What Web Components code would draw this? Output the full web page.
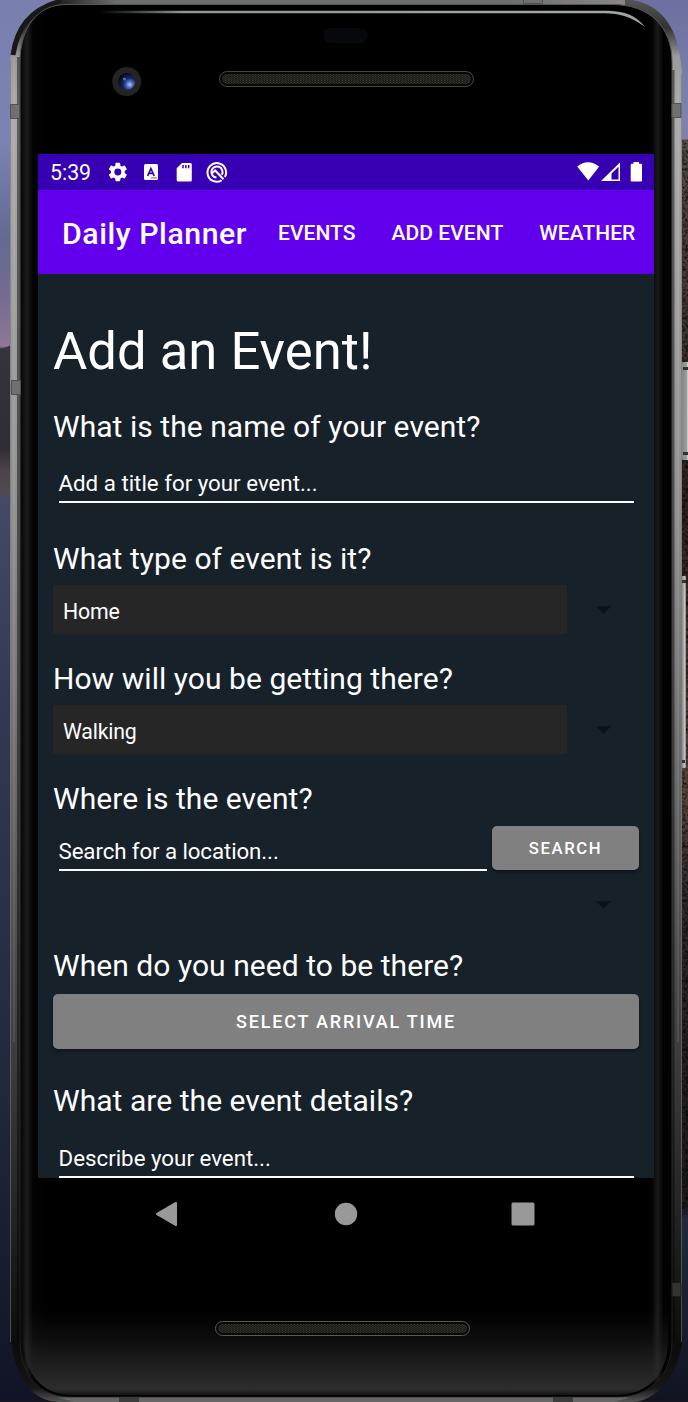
<!DOCTYPE html>
<html lang="en">
<head>
<meta charset="utf-8">
<title>Daily Planner</title>
<style>
html,body{margin:0;padding:0;background:#000;overflow:hidden}
body{width:688px;height:1402px;font-family:Roboto,"Liberation Sans",sans-serif;color:#fff}
</style>
</head>
<body>
<phone-device>
  <app-screen>
    <status-bar time="5:39"></status-bar>
    <app-bar heading="Daily Planner"><span>EVENTS</span><span>ADD EVENT</span><span>WEATHER</span></app-bar>
    <event-form></event-form>
  </app-screen>
  <nav-buttons></nav-buttons>
</phone-device>
<script>
const define = (name, html, setup) => customElements.define(name, class extends HTMLElement {
  constructor() {
    super();
    const t = document.createElement('template');
    t.innerHTML = html;
    this.attachShadow({ mode: 'open' }).append(t.content.cloneNode(true));
  }
  connectedCallback() { if (setup) setup(this, this.shadowRoot); }
});

define('phone-body', `
<style>:host{display:block;width:688px;height:1402px}svg{display:block}</style>
<svg width="688" height="1402" viewBox="0 0 688 1402">
  <defs>
    <linearGradient id="left" x2="0" y2="1402" gradientUnits="userSpaceOnUse">
      <stop offset="0" stop-color="#7980af"/><stop offset=".1" stop-color="#7b83b4"/><stop offset=".17" stop-color="#646993"/>
      <stop offset=".21" stop-color="#746b91"/><stop offset=".247" stop-color="#8d7895"/><stop offset=".249" stop-color="#35333b"/>
      <stop offset=".32" stop-color="#302e34"/><stop offset=".335" stop-color="#4a4449"/><stop offset=".352" stop-color="#504a52"/>
      <stop offset=".355" stop-color="#454965"/><stop offset=".5" stop-color="#343953"/><stop offset=".75" stop-color="#25293f"/><stop offset="1" stop-color="#111426"/>
    </linearGradient>
    <linearGradient id="right" x2="0" y2="1402" gradientUnits="userSpaceOnUse">
      <stop offset="0" stop-color="#6d70a0"/><stop offset=".08" stop-color="#8081ad"/><stop offset=".099" stop-color="#8380a8"/>
      <stop offset=".1" stop-color="#554c4c"/><stop offset=".16" stop-color="#4a3d3c"/><stop offset=".25" stop-color="#3b3330"/>
      <stop offset=".36" stop-color="#2b211c"/><stop offset=".56" stop-color="#57453f"/><stop offset=".65" stop-color="#2b272b"/>
      <stop offset=".86" stop-color="#1d191a"/><stop offset=".87" stop-color="#242a3b"/><stop offset="1" stop-color="#101322"/>
    </linearGradient>
    <linearGradient id="side" x2="0" y2="1402" gradientUnits="userSpaceOnUse">
      <stop offset="0" stop-color="#555"/><stop offset=".02" stop-color="#333"/><stop offset=".04" stop-color="#999"/><stop offset=".08" stop-color="#aaa"/>
      <stop offset=".35" stop-color="#929292"/><stop offset=".5" stop-color="#777"/><stop offset=".7" stop-color="#484848"/>
      <stop offset=".85" stop-color="#272727"/><stop offset=".96" stop-color="#0c0c0c"/><stop offset=".99" stop-color="#161616"/><stop offset="1" stop-color="#555"/>
    </linearGradient>
    <linearGradient id="rim" x2="0" y2="1402" gradientUnits="userSpaceOnUse"><stop offset="0" stop-color="#555"/><stop offset=".6" stop-color="#3a3a3a"/><stop offset="1" stop-color="#1c1c1c"/></linearGradient>
    <linearGradient id="top"><stop offset="0" stop-color="#222"/><stop offset=".1" stop-color="#6c6e6c"/><stop offset=".8" stop-color="#6c6e6c"/><stop offset="1" stop-color="#888"/></linearGradient>
    <linearGradient id="shine"><stop offset="0" stop-color="#899" stop-opacity="0"/><stop offset=".15" stop-color="#8d9595"/><stop offset=".85" stop-color="#a0a8a8"/><stop offset="1" stop-color="#dde3e3" stop-opacity=".7"/></linearGradient>
    <linearGradient id="edge" x1="20" x2="668" gradientUnits="userSpaceOnUse">
      <stop offset="0" stop-color="#040404"/><stop offset=".011" stop-color="#1b1b1b"/><stop offset=".02" stop-color="#030303"/><stop offset=".04" stop-color="#000"/>
      <stop offset=".965" stop-color="#000"/><stop offset=".975" stop-color="#030303"/><stop offset=".984" stop-color="#1b1b1b"/><stop offset=".993" stop-color="#020202"/>
    </linearGradient>
    <linearGradient id="chin" x2="0" y2="1"><stop offset="0" stop-color="#2c2c2c" stop-opacity="0"/><stop offset=".35" stop-color="#2c2c2c" stop-opacity=".3"/><stop offset=".93" stop-color="#2d2d2d"/><stop offset="1" stop-color="#151515"/></linearGradient>
    <radialGradient id="lens" cx=".68" cy=".68" r=".7"><stop offset="0" stop-color="#b4c4ff"/><stop offset=".25" stop-color="#5272c8"/><stop offset=".55" stop-color="#18265e"/><stop offset="1" stop-color="#05081b"/></radialGradient>
    <pattern id="mesh" width="3" height="2" patternUnits="userSpaceOnUse"><rect width="3" height="2" fill="#1c1a17"/><path d="M0 0h1v1H0zM1.500 1h1v1h-1z" fill="#3a3731"/></pattern>
    <filter id="grain" x="0" y="0" width="1" height="1"><feTurbulence type="fractalNoise" baseFrequency=".35" numOctaves="3" seed="4"/><feColorMatrix values="0 0 0 0 0 0 0 0 0 0 0 0 0 0 0 2.600 0 0 0 -1.100"/></filter>
    <linearGradient id="button"><stop offset="0" stop-color="#888"/><stop offset=".55" stop-color="#999"/><stop offset=".7" stop-color="#ccc"/><stop offset="1" stop-color="#888"/></linearGradient>
  </defs>
  <rect width="344" height="1402" fill="url(#left)"/>
  <rect x="344" width="344" height="1402" fill="url(#right)"/>
  <path d="M0 350 11 345v5H0z" fill="#37343c"/>
  <rect x="675" y="140" width="13" height="1075" filter="url(#grain)" opacity=".75"/>
  <path d="M0 1401h688v1H0z" fill="#25151c"/>
  <rect x="682" y="362" width="8" height="98" rx="1" fill="url(#button)"/>
  <path d="M683 367h5v3h-5zM683 452h5v3h-5z" fill="#333"/>
  <rect x="680" y="576" width="6" height="192" rx="1" fill="url(#button)"/>
  <path d="M682 580h4v3h-4zM682 760h3v3h-3z" fill="#333"/>
  <path d="M65 -1H620C656-1 675 22 680 56L682 72V1345C677 1375 656 1402 632 1402H60C34 1402 15 1379 12 1345L10 1340V60C15 30 37-1 65-1Z" fill="url(#side)"/>
  <path d="M62 1Q19 11 13 55" fill="none" stroke="#181818" stroke-width="5"/>
  <path d="M60 0H625V5H60z" fill="url(#top)"/>
  <path d="M14 57V1042M678 70V1042" stroke="#fff" stroke-opacity=".08" stroke-width="2"/>
  <path d="M18.500 57V1342M673 70V1342" stroke="#000" stroke-opacity=".45" stroke-width="3"/>
  <path d="M10.500 60V1342M681.500 74V1342" stroke="#777" stroke-opacity=".6"/>
  <path d="M66 4.500H612C650 4.500 672 27 672 62V1340C672 1374 652 1397 616 1397H72C38 1397 20 1374 20 1340V62C20 27 38 4.500 66 4.500Z" fill="url(#edge)" stroke="url(#rim)" stroke-width="1"/>
  <path d="M24 1310H668V1340C668 1374 648 1395 616 1395H72C42 1395 24 1374 24 1340Z" fill="url(#chin)"/>
  <path d="M100 10.800H608C626 11.500 637 16 645 27C630 16 620 13.800 605 13.300H100Z" fill="url(#shine)"/>
  <g fill="#707070" stroke="#505050" stroke-width="1"><path d="M10.500 104.500h9v14h-9zM11.500 380.500h9v14h-9zM672 103.500h9v14h-9z"/><path d="M672 1282.500h9v14h-9z" fill="#333" stroke="#1b1b1b"/><path d="M523.500-.5h19v4h-19z"/></g>
  <path d="M58 1397.500H630L614 1402H74Z" fill="#686666"/><path d="M119 1397h20v5h-20zM553 1397h20v5h-20z" fill="#3c3c3c"/>
  <rect x="323" y="28" width="45" height="15" rx="7.500" fill="#07080c"/>
  <circle cx="126.700" cy="81.500" r="14.500" fill="#252424"/><circle cx="126.700" cy="81.500" r="8.500" fill="url(#lens)"/><circle cx="124.500" cy="79" r="1.600" fill="#4c69bd"/>
  <rect x="219.500" y="71.500" width="254" height="15" rx="7.500" fill="#080808" stroke="#474543"/><rect x="222" y="74" width="249" height="10" rx="5" fill="url(#mesh)"/>
  <rect x="215.500" y="1321.500" width="254" height="14" rx="7" fill="#080808" stroke="#5b5958"/><rect x="218" y="1324" width="249" height="9" rx="4.500" fill="url(#mesh)"/>
</svg>`);

define('phone-device', `
<style>
:host{display:grid;width:688px;height:1402px}
phone-body,.face{grid-area:1/1}
.face{display:flex;flex-direction:column;padding:154px 34px 0 38px;isolation:isolate}
</style>
<phone-body></phone-body><div class="face"><slot></slot></div>`);

define('app-screen', `
<style>:host{display:flex;flex-direction:column;width:616px;height:1024px;background:#17212a;overflow:hidden}</style><slot></slot>`);

define('status-bar', `
<style>
:host{display:flex;align-items:center;height:36px;background:#3700b3;flex:none}
.time{width:70px;padding-left:12px;box-sizing:border-box;font-size:21.300px;line-height:36px;padding-top:2px}
svg{display:block}
</style>
<div class="time"></div>
<svg width="546" height="36" viewBox="108 154 546 36" fill="#fff">
  <path transform="translate(106.300 160.500) scale(.96)" d="M19.140 12.940c.04-.3.060-.61.060-.94s-.02-.64-.07-.94l2.030-1.580a.49.490 0 0 0 .12-.61l-1.920-3.320a.488.488 0 0 0-.59-.22l-2.390.96c-.5-.38-1.030-.7-1.620-.94l-.36-2.540A.484.484 0 0 0 13.920 2.400h-3.840c-.24 0-.43.170-.47.410l-.36 2.540c-.59.240-1.130.57-1.620.94l-2.390-.96a.47.470 0 0 0-.59.220L2.740 8.870a.47.470 0 0 0 .12.610l2.030 1.580c-.05.3-.09.630-.09.940s.02.640.070.940l-2.030 1.580a.49.490 0 0 0-.12.610l1.920 3.320c.12.220.37.290.59.220l2.390-.96c.5.380 1.030.7 1.620.94l.36 2.540c.05.240.24.410.48.410h3.840c.24 0 .44-.17.470-.41l.36-2.540c.59-.24 1.130-.56 1.620-.94l2.390.96c.22.080.47 0 .59-.22l1.920-3.320a.47.470 0 0 0-.12-.61zM12 15.600a3.600 3.600 0 1 1 0-7.200 3.600 3.600 0 0 1 0 7.200z"/>
  <rect x="144" y="164" width="14" height="16" rx="1.500"/>
  <path d="M147.600 176 150.900 168.500 154.200 176M149 173.300h3.800" fill="none" stroke="#3700b3" stroke-width="1.700"/><path d="M151 177.300h6v1.200h-6z" fill="#8a6bd0"/>
  <path fill-rule="evenodd" d="M182 163h8.300q1.500 0 1.500 1.500v15.500q0 1.500-1.500 1.500h-12.100q-1.500 0-1.500-1.500v-11.800zM182.300 165v3.300h1.500v-3.300zm2.800 0v3.300h1.500v-3.300zm2.800 0v3.300h1.500v-3.300z"/>
  <g fill="none" stroke="#fff" stroke-width="2"><path d="M221.600 180.400A9.300 9.300 0 1 1 224.900 177"/><path d="M216.500 177.600A5.600 5.600 0 1 1 221.800 174.800M211.600 173.600l3.600-3.100 8.300 8.700"/></g>
  <path d="M577.200 166.500Q587.800 158 599.200 166.500L588.300 180.500Z"/>
  <path fill-rule="evenodd" d="M601 181 620 162.500V181ZM611.500 173.500V179.500H618.500V166.700Z"/>
  <path d="M633.500 162h5.500v1.800h2q1 0 1 1v15.700q0 1-1 1h-9.300q-1 0-1-1v-15.700q0-1 1-1h1.800z"/>
</svg>`, (el, r) => { r.querySelector('.time').textContent = el.getAttribute('time'); });

define('app-bar', `
<style>
:host{display:flex;align-items:center;height:84px;background:#6200ee;flex:none;font-weight:500}
h1{font-size:30.300px;line-height:40px;font-weight:500;margin:3px 0 0 24px;width:216px;white-space:nowrap;letter-spacing:.55px;flex:none}
nav{display:flex;gap:36px;margin-top:2px;font-size:21px;line-height:28px;white-space:nowrap;letter-spacing:.05px}
</style>
<h1></h1><nav><slot></slot></nav>`, (el, r) => { r.querySelector('h1').textContent = el.getAttribute('heading'); });

define('field-label', `<style>:host{display:block;font-size:30px;line-height:36px;height:36px;white-space:nowrap;letter-spacing:.05px}</style><slot></slot>`);
define('text-field', `<style>:host{display:block;box-sizing:border-box;height:38px;margin:0 5.500px;border-bottom:2px solid #fff;font-size:22.300px;line-height:36px;white-space:nowrap}</style><slot></slot>`);
define('drop-down', `
<style>
:host{display:flex;align-items:center;height:49px}
.value{width:514px;height:49px;box-sizing:border-box;padding:2px 10px 0;background:#262626;font-size:21.300px;letter-spacing:-.2px;line-height:49px}
:host([empty]) .value{background:none}
svg{margin-left:29px;display:block}
</style>
<div class="value"><slot></slot></div><svg width="15" height="8"><path d="M0 .3h15L7.500 7.800z" fill="#0b1116"/></svg>`);
define('action-button', `<style>:host{display:flex;align-items:center;justify-content:center;box-sizing:border-box;background:#808080;border-radius:5px;box-shadow:0 2px 3px #0006;font-weight:500;white-space:nowrap}</style><slot></slot>`);

define('event-form', `
<style>
:host{display:flex;flex-direction:column;padding:0 15px}
h2{font-size:52.600px;font-weight:400;line-height:64px;margin:45px 0 0;white-space:nowrap}
.name{margin-top:26px}.name-field{margin-top:20px}
.type{margin-top:38px}.drop{margin-top:8px}.next{margin-top:27px}
.row{display:flex;margin-top:9px;align-items:flex-start}
.row text-field{width:428px;margin:7px 5.500px 0;flex:none;letter-spacing:-.1px}
.search{width:147px;height:44px;font-size:16.700px;letter-spacing:1.600px}
.places{margin-top:9px}.when{margin-top:19px}
.arrival{height:55px;margin-top:10px;font-size:18px;letter-spacing:1.800px}
.details{margin-top:34px}.details-field{margin-top:21px;flex:none}
</style>
<h2>Add an Event!</h2>
<field-label class="name">What is the name of your event?</field-label>
<text-field class="name-field">Add a title for your event...</text-field>
<field-label class="type">What type of event is it?</field-label>
<drop-down class="drop">Home</drop-down>
<field-label class="next">How will you be getting there?</field-label>
<drop-down class="drop">Walking</drop-down>
<field-label class="next">Where is the event?</field-label>
<div class="row"><text-field>Search for a location...</text-field><action-button class="search">SEARCH</action-button></div>
<drop-down class="places" empty></drop-down>
<field-label class="when">When do you need to be there?</field-label>
<action-button class="arrival">SELECT ARRIVAL TIME</action-button>
<field-label class="details">What are the event details?</field-label>
<text-field class="details-field">Describe your event...</text-field>`);

define('nav-buttons', `
<style>:host{display:flex;justify-content:space-between;align-items:center;width:380px;height:26px;margin:23px 0 0 117px}svg{display:block}.home{margin-left:2px}</style>
<svg width="23" height="26"><path d="M1.500 12 20.500 1Q22 .500 22 2v22q0 1.500-1.500 1L1.500 14Q0 13 1.500 12" fill="#999"/></svg>
<svg class="home" width="24" height="24"><circle cx="12" cy="12" r="11.200" fill="#999"/></svg>
<svg width="24" height="24"><rect x=".5" y=".5" width="23" height="23" rx="1.500" fill="#999"/></svg>`);
</script>
</body>
</html>
